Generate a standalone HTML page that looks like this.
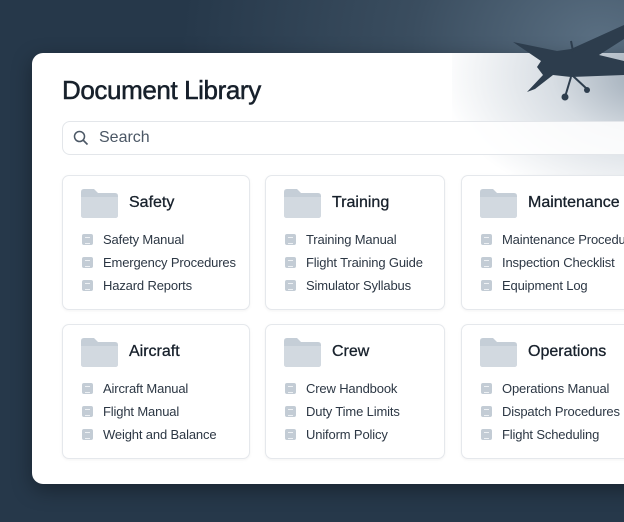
<!DOCTYPE html><html><head><style>
body{margin:0;width:624px;height:522px;overflow:hidden;font-family:"Liberation Sans",sans-serif;background:radial-gradient(ellipse 420px 300px at 600px 40px,#5a6f82 0%,#3a4d5f 45%,#26384a 100%);position:relative}
.panel{position:absolute;left:32px;top:53px;width:620px;height:431px;background:#fff;border-radius:11px;box-shadow:0 6px 20px rgba(0,0,0,.35);overflow:hidden}
.glow{position:absolute;right:0;top:0;width:200px;height:150px;background:radial-gradient(ellipse at 100% 15%,#9aa7b4 0%,#d7dde3 35%,rgba(255,255,255,0) 75%)}
h1{position:absolute;left:30px;top:22px;margin:0;font-size:26px;font-weight:normal;color:#17202b;letter-spacing:-.4px;-webkit-text-stroke:.5px #17202b}
.search{position:absolute;left:30px;top:68px;width:620px;height:32px;border:1px solid #e3e6ea;border-radius:8px;background:rgba(255,255,255,.85)}
.search span{position:absolute;left:36px;top:7px;font-size:16px;color:#4b5765}
.card{position:absolute;border:1px solid #e5e8ec;border-radius:7px;background:#fff;box-shadow:0 1px 3px rgba(0,0,0,.05)}
.card .f{position:absolute;left:18px;top:13px}
.card .t{position:absolute;left:66px;top:18px;font-size:16px;color:#17202b;-webkit-text-stroke:.3px #17202b}
.card ul{list-style:none;margin:0;padding:0;position:absolute;left:19px;top:56px}
.card li{height:23px;font-size:13px;color:#2c3744;position:relative;padding-left:21px;white-space:nowrap;letter-spacing:-.15px}
.card li:before{content:"";position:absolute;left:0;top:2px;width:11px;height:11px;border-radius:2px;background:#c3ccd5}
.card li:after{content:"";position:absolute;left:3px;top:5px;width:5px;height:5px;border-top:1px solid #eef1f4;border-bottom:1px solid #eef1f4}
</style></head><body>
<div class="panel">
<div class="glow"></div>
<h1>Document Library</h1>
<div class="search"><svg style="position:absolute;left:10px;top:8px" width="16" height="16" viewBox="0 0 16 16"><circle cx="6.5" cy="6.5" r="5" fill="none" stroke="#4b5765" stroke-width="1.5"/><path d="M10 10l4.5 4.5" stroke="#4b5765" stroke-width="1.6"/></svg><span>Search</span></div>
</div>
<svg style="position:absolute;left:505px;top:25px" width="119" height="80" viewBox="0 0 119 80"><g fill="#2d3d4d"><path d="M8 17 L52 26 L66 24 L119 0 L119 14 L94 30 L119 36 L119 50 L66 52 L48 50 L30 64 L22 67 L38 50 L32 42 L36 36 Z"/><path d="M66 52 L60 72" stroke="#2d3d4d" stroke-width="2"/><path d="M68 51 L82 64" stroke="#2d3d4d" stroke-width="2"/><circle cx="60" cy="72" r="3.5"/><circle cx="82" cy="65" r="3"/><path d="M66 16 L68 26" stroke="#2d3d4d" stroke-width="2"/></g></svg>
<div id="cards"></div>
<script>
const d=[[62,175,186,"Safety",["Safety Manual","Emergency Procedures","Hazard Reports"]],[265,175,178,"Training",["Training Manual","Flight Training Guide","Simulator Syllabus"]],[461,175,200,"Maintenance",["Maintenance Procedures","Inspection Checklist","Equipment Log"]],[62,324,186,"Aircraft",["Aircraft Manual","Flight Manual","Weight and Balance"]],[265,324,178,"Crew",["Crew Handbook","Duty Time Limits","Uniform Policy"]],[461,324,200,"Operations",["Operations Manual","Dispatch Procedures","Flight Scheduling"]]];
let h="";for(const[x,y,w,t,l]of d){h+=`<div class="card" style="left:${x}px;top:${y}px;width:${w}px;height:133px"><svg class="f" width="37" height="29" viewBox="0 0 37 29"><path d="M0 3Q0 0 3 0H13L17 4H34Q37 4 37 7V26Q37 29 34 29H3Q0 29 0 26Z" fill="#c5ced7"/><path d="M0 8H37V26Q37 29 34 29H3Q0 29 0 26Z" fill="#d2d9e0"/></svg><div class="t">${t}</div><ul>${l.map(i=>`<li>${i}</li>`).join("")}</ul></div>`}
document.getElementById("cards").innerHTML=h;
</script>
</body></html>
